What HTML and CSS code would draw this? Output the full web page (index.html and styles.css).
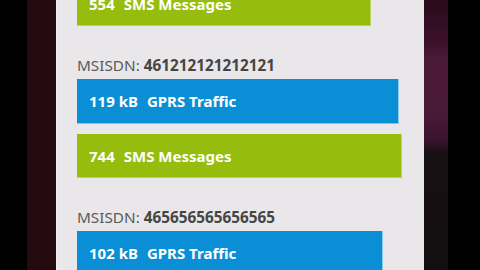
FILE: index.html
```html
<!DOCTYPE html>
<html lang="en">
<head>
    <meta charset="UTF-8">
    <title>Usage</title>
    <link rel="stylesheet" href="styles.css">
</head>
<body>
<div class="screen">
    <div class="side side-left"></div>
    <div class="panel">
        <div class="list">
            <div class="bar sms" style="width: 294px;"><span class="num">554</span>SMS Messages</div>

            <div class="msisdn">MSISDN: <b>461212121212121</b></div>
            <div class="bar gprs" style="width: 322px;"><span class="num">119 kB</span>GPRS Traffic</div>
            <div class="bar sms" style="width: 325px;"><span class="num">744</span>SMS Messages</div>

            <div class="msisdn">MSISDN: <b>465656565656565</b></div>
            <div class="bar gprs" style="width: 306px;"><span class="num">102 kB</span>GPRS Traffic</div>
        </div>
    </div>
    <div class="side side-right"></div>
</div>
</body>
</html>
```

FILE: styles.css
```css
body {
    margin: 0;
    background-color: #000;
    font-family: 'Noto Sans', 'Open Sans', sans-serif;
    overflow: hidden;
}
.screen {
    display: flex;
    height: 270px;
    padding-left: 27px;
    overflow: hidden;
}
.side {
    flex: none;
    height: 100%;
}
.side-left {
    width: 29px;
    background-color: #240a0e;
}
.side-right {
    width: 24px;
    background: linear-gradient(180deg, #2a0b1c 0px, #3a1029 40px, #4b1a38 60px, #4a1a37 110px, #3b1430 140px, #181012 152px, #130f11 270px);
}
.panel {
    flex: none;
    width: 368px;
    height: 100%;
    background-color: #e9e7e9;
    border-left: 1px solid #f2f0f2;
    padding-left: 20px;
    box-sizing: border-box;
}
.list {
    margin-top: -18px;
}
.bar {
    height: 44px;
    box-sizing: border-box;
    display: flex;
    align-items: center;
    padding-left: 12px;
    color: #fff;
    font-size: 15px;
    font-weight: bold;
    white-space: nowrap;
}
.bar .num {
    margin-right: 9px;
}
.sms {
    background-color: #96bd0d;
    border-right: 1px solid #b9d75a;
    border-bottom: 1px solid #b6d35c;
}
.gprs {
    height: 45px;
    background-color: #0a8fd6;
    border-right: 1px solid #8ccaed;
    border-bottom: 1px solid #7fc2ea;
    margin-bottom: 10px;
}
.msisdn {
    margin-top: 29px;
    margin-bottom: 4px;
    line-height: 20px;
    font-size: 15.3px;
    color: #5a5a5a;
}
.msisdn b {
    color: #454545;
}
```
